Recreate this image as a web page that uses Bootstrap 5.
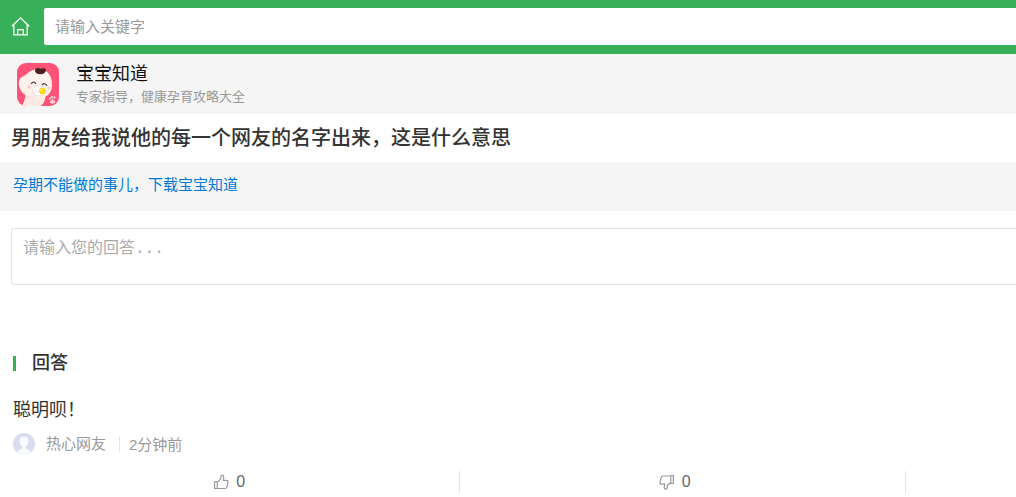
<!DOCTYPE html>
<html lang="zh-CN">
<head>
<meta charset="utf-8">
<meta name="viewport" content="width=device-width, initial-scale=1">
<title>宝宝知道</title>
<link href="https://cdn.jsdelivr.net/npm/bootstrap@5.3.0/dist/css/bootstrap.min.css" rel="stylesheet">
<style>
  body { font-family: "Liberation Sans", "Noto Sans CJK SC", sans-serif; font-size: 15px; line-height: 20px; color: #333; background: #fff; overflow-x: hidden; }
  .topbar { background: #38b059; padding: 8px 0 9px 11px; }
  .topbar .home { width: 33px; }
  .topbar .form-control { height: 37px; border: 0; border-radius: 2px 0 0 2px; padding: 0 11px; font-size: 15px; }
  .form-control::placeholder { color: #999; opacity: 1; }
  .app-banner { background: #f5f5f5; height: 60px; padding-left: 17px; gap: 17px; color: #111; }
  .app-name { font-size: 18px; line-height: 24px; padding-top: 2px; }
  .app-desc { font-size: 13px; line-height: 22px; color: #999; }
  .question { font-size: 20px; line-height: 24px; padding: 12px 12px 12px 11px; font-weight: 500; }
  .promo { background: #f5f5f5; padding: 13px 13px 16px; }
  .promo a { color: #0078d7; }
  .reply-form { padding: 17px 0 0 11px; }
  .reply-form .form-control { height: 57px; resize: none; overflow: hidden; border: 1px solid #e4e4e4; border-right: 0; border-radius: 3px 0 0 3px; padding: 10px 11px; font: 16px/20px "Liberation Mono", "Noto Sans CJK SC", monospace; }
  .reply-form .form-control::placeholder { color: #aaa; }
  .answers { padding: 66px 0 0 13px; }
  .answers h2 { font-size: 18px; line-height: 24px; font-weight: 500; gap: 16px; }
  .answers h2::before { content: ""; width: 3px; height: 15px; background: #38b059; }
  .answer-text { font-size: 18px; line-height: 24px; margin-top: 23px; }
  .meta { color: #999; margin-top: 11px; line-height: 22px; gap: 11px; }
  .meta .when { border-left: 1px solid #e4e4e4; margin-left: 2px; padding-left: 9px; line-height: 15px; }
  .votes { margin-top: 16px; padding-left: 2px; }
  .vote { flex: 0 0 44.5%; height: 22px; padding-right: 16px; border-right: 1px solid #e4e4e4; }
  .vote .btn { font-size: 16px; line-height: 22px; color: #666; gap: 7px; }
</style>
</head>
<body>
<header class="topbar d-flex align-items-center">
  <a href="#" class="home d-flex flex-shrink-0" aria-label="首页">
    <svg width="19" height="20" viewBox="0 0 19 20" fill="none" stroke="#fff" stroke-width="1.3"><path d="M.8 9.200 9.500.9l8.700 8.300M2.800 7.500v10.300h13.400V7.500M6.700 17.800v-5.200h5.600v5.200"/></svg>
  </a>
  <input type="text" class="form-control" placeholder="请输入关键字" aria-label="请输入关键字">
</header>
<section class="app-banner d-flex align-items-center">
  <svg class="flex-shrink-0" width="42" height="43" viewBox="0 0 42 43" aria-hidden="true">
    <defs><clipPath id="tile"><rect width="42" height="43" rx="9"/></clipPath></defs>
    <g clip-path="url(#tile)">
      <rect width="42" height="43" fill="#ff5277"/>
      <path d="M5 43C7 39 8 35 9 30h19c1 5 0 9-4 13z" fill="#fde9e4"/>
      <path d="M2 22C1 16 5 13 9 12 12 8 17 6 23 6c9 1 12 8 12 16 0 9-6 13-14 13C11 36 3 30 2 22z" fill="#fff1ec"/>
      <path d="M18 8c0-4 4-3 6-2 1-1 5-1 5 1 0 5-10 6-11 1z" fill="#4b211d"/>
      <path d="M14 21q3-4 5 0M25 22q3-3 5 1" fill="none" stroke="#503936" stroke-width="1.200"/>
      <circle cx="12" cy="24" r="1.800" fill="#ffc8c7"/><circle cx="32" cy="25" r="1.500" fill="#ffc8c7"/>
      <path d="M16 26c2-4 6-3 8-2 5-1 7 2 6 6-2 4-7 2-10 3-4 0-5-4-4-7z" fill="#fff" stroke="#dddde2" stroke-width=".8"/>
      <circle cx="25.500" cy="28" r="3.500" fill="#ffd51d"/><circle cx="24.500" cy="27" r="1.200" fill="#fff07a"/>
      <path d="M8 34c4-1 7 2 11-1M15 28l4 4M18 26l3 4" fill="none" stroke="#f4cfc8" stroke-width=".8"/>
      <g fill="#ffd3dc"><ellipse cx="33" cy="35.500" rx="1" ry="1.300"/><ellipse cx="35" cy="34" rx="1" ry="1.300"/><ellipse cx="37.500" cy="34.500" rx="1" ry="1.300"/><path d="M33 39c0-1.500 1.500-1.500 2.500-3 1.200 1.700 2.800 1.700 2.800 3.200 0 1.800-5.300 1.800-5.300-.2z"/></g>
    </g>
  </svg>
  <div>
    <div class="app-name">宝宝知道</div>
    <div class="app-desc">专家指导，健康孕育攻略大全</div>
  </div>
</section>
<h1 class="question mb-0">男朋友给我说他的每一个网友的名字出来，这是什么意思</h1>
<div class="promo"><a href="#" class="text-decoration-none">孕期不能做的事儿，下载宝宝知道</a></div>
<div class="reply-form"><textarea class="form-control" placeholder="请输入您的回答..." aria-label="请输入您的回答"></textarea></div>
<main class="answers">
  <h2 class="d-flex align-items-center mb-0">回答</h2>
  <p class="answer-text mb-0">聪明呗！</p>
  <div class="meta d-flex align-items-center">
    <svg width="22" height="22" viewBox="0 0 22 22" aria-hidden="true"><circle cx="11" cy="11" r="11" fill="#d9dded"/><path d="M11 3.500c-3.600 0-4.700 2.500-4.200 5.500.3 2 1.200 3.500 2.400 4.500v2C7 16.300 5.200 17 4.300 19.700a11 11 0 0 0 13.400 0c-.9-2.700-2.700-3.400-4.900-4.200v-2c1.200-1 2.100-2.500 2.400-4.500.5-3-.6-5.500-4.200-5.500z" fill="#fafbfd"/></svg>
    <span>热心网友</span>
    <span class="when">2分钟前</span>
  </div>
  <div class="votes d-flex">
    <div class="vote d-flex justify-content-center">
      <button type="button" class="btn p-0 border-0 d-flex align-items-center" aria-label="赞同 0"><svg width="16" height="16" viewBox="0 0 16 16" fill="none" stroke="#999" stroke-width="1.2" stroke-linejoin="round"><path d="M1.600 7.500h2.600v7H1.600zM4.200 8.500l3.300-3.300L8.300 1.500c2-.6 2.700 1 2.400 2.500L10.200 6.300h3.500c1.200 0 1.600.8 1.400 1.600l-1.300 5.300c-.2.900-.7 1.300-1.500 1.300H4.200"/></svg>0</button>
    </div>
    <div class="vote d-flex justify-content-center">
      <button type="button" class="btn p-0 border-0 d-flex align-items-center" aria-label="反对 0"><svg width="16" height="16" viewBox="0 0 16 16" fill="none" stroke="#999" stroke-width="1.2" stroke-linejoin="round"><path d="M14.400 1.500h-2.600v8h2.600zM11.800 8.500l-3.300 2.800-.8 3.700c-2 .6-2.700-1-2.400-2.500l.5-2.300H2.300c-1.200 0-1.600-.8-1.400-1.600l1.300-5.300c.2-.9.7-1.300 1.500-1.300h8.100"/></svg>0</button>
    </div>
  </div>
</main>
<script src="https://cdn.jsdelivr.net/npm/bootstrap@5.3.0/dist/js/bootstrap.bundle.min.js"></script>
</body>
</html>
